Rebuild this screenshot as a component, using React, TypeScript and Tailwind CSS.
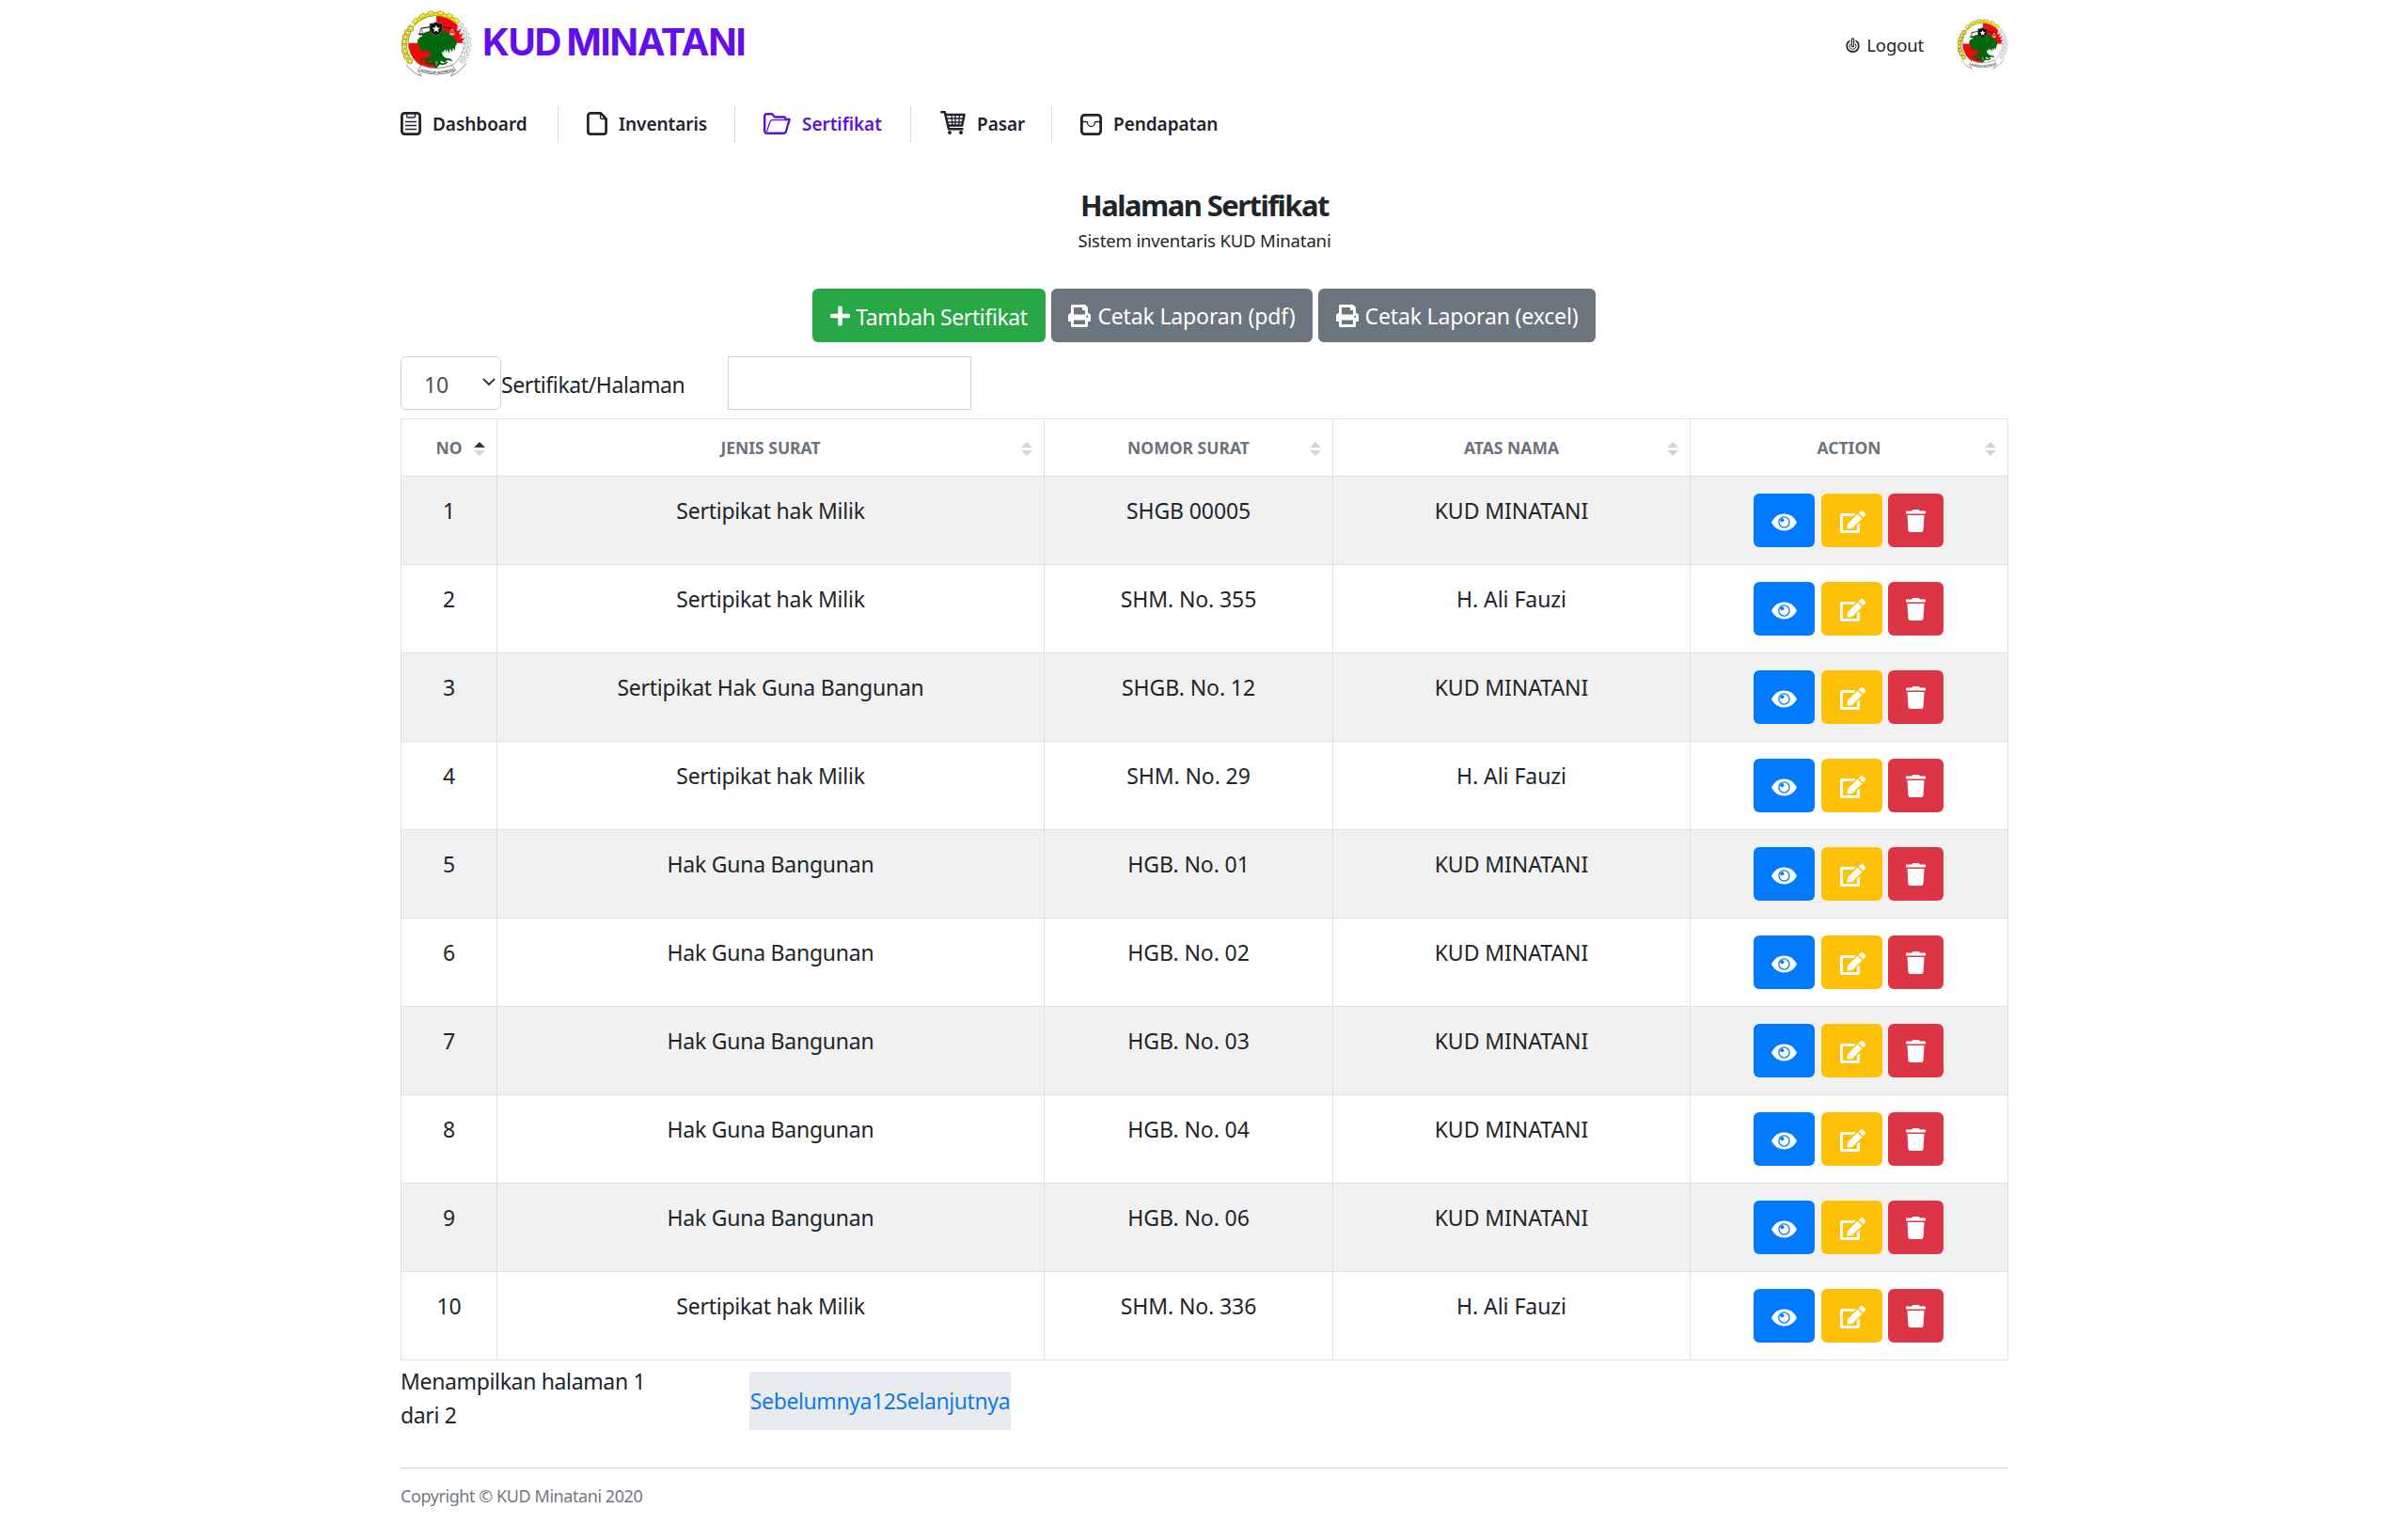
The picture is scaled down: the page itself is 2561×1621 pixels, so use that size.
import type { ReactNode } from "react";
import { FaEdit, FaPlus, FaPrint, FaTrash } from "react-icons/fa";

const rows = [
  ["Sertipikat hak Milik", "SHGB 00005", "KUD MINATANI"],
  ["Sertipikat hak Milik", "SHM. No. 355", "H. Ali Fauzi"],
  ["Sertipikat Hak Guna Bangunan", "SHGB. No. 12", "KUD MINATANI"],
  ["Sertipikat hak Milik", "SHM. No. 29", "H. Ali Fauzi"],
  ["Hak Guna Bangunan", "HGB. No. 01", "KUD MINATANI"],
  ["Hak Guna Bangunan", "HGB. No. 02", "KUD MINATANI"],
  ["Hak Guna Bangunan", "HGB. No. 03", "KUD MINATANI"],
  ["Hak Guna Bangunan", "HGB. No. 04", "KUD MINATANI"],
  ["Hak Guna Bangunan", "HGB. No. 06", "KUD MINATANI"],
  ["Sertipikat hak Milik", "SHM. No. 336", "H. Ali Fauzi"],
];

const leaves = [
  [209, 66, -45], [219, 80, -32], [227, 95, -22], [232, 111, -12], [234, 128, 0],
  [232, 145, 12], [226, 162, 22], [217, 177, 34],
];
const chain = [
  [48, 74], [38, 88], [31, 103], [27, 119], [26, 135], [29, 151], [35, 167], [45, 182],
];
const teeth = [-44, -27, -10, 8, 26, 42];

function Emblem({ className }: { className: string }) {
  return (
    <svg viewBox="18 14 230 222" preserveAspectRatio="none" className={className}>
      <circle cx="131" cy="122" r="91" fill="#fff" stroke="#666" strokeWidth="2" />
      <path d="M132 123V32a92 90 0 0 1 90 91z" fill="#ee0a0a" />
      <path d="M132 123v90a92 90 0 0 1-91-90z" fill="#ee0a0a" />
      <path d="M58 59A97 97 0 0 1 196 52" fill="none" stroke="#77731a" strokeWidth="12" />
      <path d="M58 59A97 97 0 0 1 196 52" fill="none" stroke="#f4ea1a" strokeWidth="9" />
      {teeth.map((a) => (
        <rect key={a} x="122" y="16" width="19" height="12" rx="3" fill="#f7ee1a" stroke="#77731a" strokeWidth="1.5" transform={`rotate(${a} 131 122)`} />
      ))}
      {chain.map(([x, y]) => (
        <g key={y}>
          <ellipse cx={x} cy={y} rx="7" ry="8" fill="#fff" stroke="#7a7510" strokeWidth="6.5" />
          <ellipse cx={x} cy={y} rx="7" ry="8" fill="none" stroke="#efe21a" strokeWidth="4" />
        </g>
      ))}
      {leaves.map(([x, y, a]) => (
        <g key={y} transform={`translate(${x} ${y}) rotate(${a})`} fill="#fff" stroke="#8a8a8a" strokeWidth="1.6">
          <ellipse cx="-6" cy="0" rx="4.5" ry="8.500" transform="rotate(-32)" />
          <ellipse cx="7" cy="0" rx="4.5" ry="8.500" transform="rotate(32)" />
          <circle cx="-13" cy="4" r="3.500" stroke="#ccc" />
        </g>
      ))}
      <path
        d="M115 148L110 160L105 150L102 140L98 157L93 143L88 158L83 144L79 146L76 130Q66 122 72 111Q76 103 85 101Q88 86 104 84Q117 78 132 80Q150 77 162 85Q177 88 181 101Q191 104 196 113Q203 122 194 132L192 148L186 139L183 153L177 141L173 158L168 143L164 155L160 142L155 155L150 150Q150 166 162 172L178 175L186 184L168 180L158 188L147 181L143 194L132 199L121 194L117 181L106 188L96 180L78 184L86 175L103 172Q116 165 115 148Z"
        fill="#00680c"
      />
      <path d="M96 186q14 12 26 3l10 14 10-14q13 9 26-3" fill="none" stroke="#004d0a" strokeWidth="5" />
      <path d="M127 187l5 16 5-16-5-6z" fill="#4aa33c" />
      <path d="M82 74l30-5h40l34 6" fill="none" stroke="#222" strokeWidth="4" />
      <path d="M82 74l-6 17h12z" fill="none" stroke="#222" strokeWidth="2" />
      <path d="M183 75l-6 16h13z" fill="none" stroke="#eee" strokeWidth="2" />
      <path d="M71 91h22q-11 12-22 0z" fill="#222" />
      <path d="M172 91h22q-11 12-22 0z" fill="#eee" stroke="#444" />
      <path d="M110 58q12 1 20-5 9 6 21 5v22q-3 11-21 18-17-7-20-18z" fill="#111" stroke="#777" strokeWidth="2" />
      <path d="M131 63l4 9h9l-7 6 3 9-9-5-8 5 3-9-8-6h9z" fill="#fff" />
      <path d="M33 194q22 30 50 38l-12-20M229 190q-22 32-50 42l14-20" fill="none" stroke="#888" strokeWidth="3" />
      <path d="M82 196q49 21 102 0l10 18q-60 26-122 0z" fill="#fff" stroke="#888" strokeWidth="3" />
      <path id="ribbon" d="M80 215q52 17 106-1" fill="none" />
      <text className="font-['Liberation_Sans',sans-serif] text-[10px] font-bold tracking-normal" fill="#333">
        <textPath href="#ribbon">KOPERASI INDONESIA</textPath>
      </text>
    </svg>
  );
}

function NotesIcon() {
  return (
    <svg viewBox="0 0 22 25" className="-mt-0.5 h-[25px] w-[22px]" fill="none" stroke="currentColor">
      <rect x="1.4" y="1.4" width="19.2" height="22.2" rx="3" strokeWidth="2.8" />
      <path d="M6.5 2v2.500q0 1.500 1.500 1.500h6q1.500 0 1.500-1.500V2M5 10.500h12M5 14.500h12M5 18.500h12" strokeWidth="1.400" />
    </svg>
  );
}

function FileIcon() {
  return (
    <svg viewBox="0 0 22 25" className="-mt-0.5 h-[25px] w-[22px]" fill="none" stroke="currentColor" strokeLinejoin="round">
      <path d="M4 1.400h11L20.600 7.500V21a2.600 2.600 0 0 1-2.600 2.600H4A2.600 2.600 0 0 1 1.400 21V4A2.600 2.600 0 0 1 4 1.400z" strokeWidth="2.700" />
      <path d="M14.500 2v3.500a2 2 0 0 0 2 2H20" strokeWidth="1.400" />
    </svg>
  );
}

function FolderIcon() {
  return (
    <svg viewBox="0 0 29 23" className="-mt-0.5 h-[23px] w-[29px]" fill="none" stroke="currentColor" strokeLinejoin="round">
      <path d="M4 21.800A2.800 2.800 0 0 1 1.200 19V3.500A2.300 2.300 0 0 1 3.500 1.200h5.700L12 4.500h9.500q2 0 2 2.500h4.200l-3.600 12.500q-.7 2.300-3 2.300z" strokeWidth="2.400" />
      <path d="M3.500 20L7 9.500Q7.500 7.600 9.500 7.600H25" strokeWidth="1.300" />
    </svg>
  );
}

function CartIcon() {
  return (
    <svg viewBox="0 0 27 25" className="-mt-1 h-[25px] w-[27px]" fill="none" stroke="currentColor" strokeLinecap="round" strokeLinejoin="round">
      <path d="M1.300 1.300h3.500l4.200 18h14.500M5.500 4h20l-2.300 11.500H8.500" strokeWidth="2.500" />
      <path d="M6.500 8h17.500M7.500 12h16M12 4.500l1 11M16 4.500v11M20.500 4.500l-1 11" strokeWidth="1.300" />
      <circle cx="10" cy="23" r="2" fill="currentColor" stroke="none" />
      <circle cx="22" cy="23" r="2" fill="currentColor" stroke="none" />
    </svg>
  );
}

function PocketIcon() {
  return (
    <svg viewBox="0 0 23 23" className="h-[23px] w-[23px]" fill="none" stroke="currentColor">
      <rect x="1.400" y="1.400" width="20.200" height="20.200" rx="3" strokeWidth="2.800" />
      <path d="M2 8.500h4.500q1.200 0 1.200 1.200a3.800 3.800 0 0 0 7.600 0q0-1.200 1.200-1.200H21" strokeWidth="1.300" />
    </svg>
  );
}

function PowerIcon() {
  return (
    <svg viewBox="0 0 15 16" className="-mt-px h-4 w-[15px]" fill="none" stroke="currentColor">
      <path d="M4.500 3.300a6.300 6.300 0 1 0 6 0" strokeWidth="1.700" />
      <path d="M4.800 6.700a3.500 3.500 0 1 0 5.400 0" strokeWidth="1" />
      <path d="M6.400 8.500V2a1.100 1.100 0 0 1 2.200 0v6.500a1.100 1.100 0 0 1-2.200 0z" fill="#fff" strokeWidth="1.200" />
    </svg>
  );
}

function EyeIcon() {
  return (
    <svg viewBox="0 0 27 19" className="mt-[3px] h-[19px] w-[27px]">
      <path d="M.3 8.700Q5 .4 13.500.4t13.200 8.300q.4.800 0 1.600Q22 18.600 13.500 18.600T.3 10.300q-.4-.8 0-1.600z" fill="#fff" />
      <circle cx="13.500" cy="9.500" r="5.600" fill="none" stroke="#007bff" strokeWidth="1.300" />
      <circle cx="11.400" cy="7.300" r="2" fill="#007bff" />
    </svg>
  );
}

function NavItem({ icon, label, className }: { icon: ReactNode; label: string; className: string }) {
  return (
    <a className={`flex h-[37px] shrink-0 items-center text-[19px] leading-[30px] font-semibold tracking-[-0.05px] ${className}`}>
      {icon}
      <span className="-mt-px ml-3">{label}</span>
    </a>
  );
}

function SortArrows({ active }: { active?: boolean }) {
  return (
    <svg viewBox="0 0 12 15" className="absolute top-6 right-3 h-[15px] w-3">
      <path d="M6 0l6 6H0z" fill={active ? "#343541" : "#d0d4da"} />
      <path d="M6 15l6-6H0z" fill="#d0d4da" />
    </svg>
  );
}

const columns = "grid grid-cols-[102px_582px_307px_380px_338px]";
const cell = "border-r border-b border-[#dee2e6]";
const button = "flex h-[57px] items-center justify-center rounded-md text-white";
const tracking = ["", "tracking-[-0.240px]", "tracking-[-0.100px]", "tracking-[-0.050px]"];

export default function App() {
  return (
    <div className="min-h-[1621px] bg-white font-['Noto_Sans',sans-serif] text-[23px] leading-9 tracking-[-0.15px] text-[#212529]">
      <div className="ml-[426px] w-[1710px]">
        <header className="flex h-[95px] items-start">
          <Emblem className="mt-[11px] ml-px h-[71px] w-[75px]" />
          <h1 className="mt-5 ml-[11px] font-['Inter',sans-serif] text-[40px] leading-[49px] font-bold tracking-[-1.250px] [word-spacing:-2px] text-[#640eee]">
            KUD MINATANI
          </h1>
          <a className="mt-[33px] ml-auto flex items-center text-[18.500px] leading-[30px] tracking-[-0.150px]">
            <PowerIcon />
            <span className="ml-[7px]">Logout</span>
          </a>
          <Emblem className="mt-[20px] ml-[36px] h-[54px] w-[54px]" />
        </header>

        <nav className="mt-[19px] flex text-[#21222c]">
          <NavItem icon={<NotesIcon />} label="Dashboard" className="w-[167px]" />
          <NavItem icon={<FileIcon />} label="Inventaris" className="w-[188px] border-l border-dotted border-[#bbb] pl-[30px]" />
          <NavItem icon={<FolderIcon />} label="Sertifikat" className="w-[187px] border-l border-dotted border-[#bbb] pl-[30px] text-[#5b15d6]" />
          <NavItem icon={<CartIcon />} label="Pasar" className="w-[150px] border-l border-dotted border-[#bbb] pl-[31px]" />
          <NavItem icon={<PocketIcon />} label="Pendapatan" className="border-l border-dotted border-[#bbb] pl-[30px]" />
        </nav>

        <div className="mt-[47px] text-center">
          <h2 className="text-[31px] leading-10 font-bold tracking-[-1.550px]">Halaman Sertifikat</h2>
          <p className="mt-0.5 text-[18.500px] leading-[32px] tracking-[-0.150px]">Sistem inventaris KUD Minatani</p>
        </div>

        <div className="mt-[35px] -ml-px flex justify-center gap-[6px]">
          <button className={`${button} w-[248px] bg-[#28a745]`}>
            <FaPlus className="h-6 w-[21px]" />
            <span className="mt-0.5 ml-[6px] tracking-[-0.400px]">Tambah Sertifikat</span>
          </button>
          <button className={`${button} w-[278px] bg-[#6c757d]`}>
            <FaPrint className="size-6" />
            <span className="ml-[7px]">Cetak Laporan (pdf)</span>
          </button>
          <button className={`${button} w-[295px] bg-[#6c757d]`}>
            <FaPrint className="size-6" />
            <span className="ml-[7px]">Cetak Laporan (excel)</span>
          </button>
        </div>

        <div className="mt-[15px] flex h-[57px] items-center">
          <div className="flex h-[57px] w-[107px] items-center rounded-md border border-[#ced4da] pl-[24px] text-[#495057]">
            <span className="mt-0.5">10</span>
            <svg viewBox="0 0 14 9" className="mr-[5px] mb-[3px] ml-auto h-[9px] w-[14px]" fill="none" stroke="#343a40" strokeWidth="2">
              <path d="M1 1l6 6 6-6" />
            </svg>
          </div>
          <span className="mt-0.5 w-[241px] tracking-[-0.400px]">Sertifikat/Halaman</span>
          <div className="h-[57px] w-[259px] border border-[#ced4da]" />
        </div>

        <div className="mt-[9px] border-t border-l border-[#dee2e6] text-center">
          <div className={`${columns} h-[61px] text-[17.500px] leading-[60px] font-bold tracking-normal text-[#6e727d]`}>
            {["NO", "JENIS SURAT", "NOMOR SURAT", "ATAS NAMA", "ACTION"].map((name, i) => (
              <div key={name} className={`${cell} relative`}>
                {name}
                <SortArrows active={i === 0} />
              </div>
            ))}
          </div>
          {rows.map((row, i) => (
            <div key={i} className={`${columns} h-[94px] odd:bg-white even:bg-[#f1f1f1]`}>
              {[i + 1, ...row].map((value, j) => (
                <div key={j} className={`${cell} pt-[18px] ${tracking[j]}`}>{value}</div>
              ))}
              <div className={`${cell} flex items-start pt-[18px] pl-[67px]`}>
                <button className={`${button} w-[65px] bg-[#007bff]`}>
                  <EyeIcon />
                </button>
                <button className={`${button} ml-[7px] w-[65px] bg-[#ffc107]`}>
                  <FaEdit className="mt-0.5 ml-px h-6 w-[27px]" />
                </button>
                <button className={`${button} ml-[6px] w-[59px] bg-[#dc3545]`}>
                  <FaTrash className="h-6 w-[21px]" />
                </button>
              </div>
            </div>
          ))}
        </div>

        <div className="flex h-[115px] items-start border-b border-[#d0d3d7] pt-[3px]">
          <p className="mt-px w-[371px] pr-[80px] tracking-[-0.350px]">
            Menampilkan halaman 1<br />dari 2
          </p>
          <div className="mt-[9px] flex h-[62px] w-[278px] items-center justify-center bg-[#e9ecef] tracking-[-0.400px] text-[#0f7bea]">
            <a>Sebelumnya</a>
            <a>1</a>
            <a>2</a>
            <a>Selanjutnya</a>
          </div>
        </div>
        <footer className="mt-[13px] text-[18px] leading-8 tracking-[-0.430px] text-[#74787e]">Copyright © KUD Minatani 2020</footer>
      </div>
    </div>
  );
}
